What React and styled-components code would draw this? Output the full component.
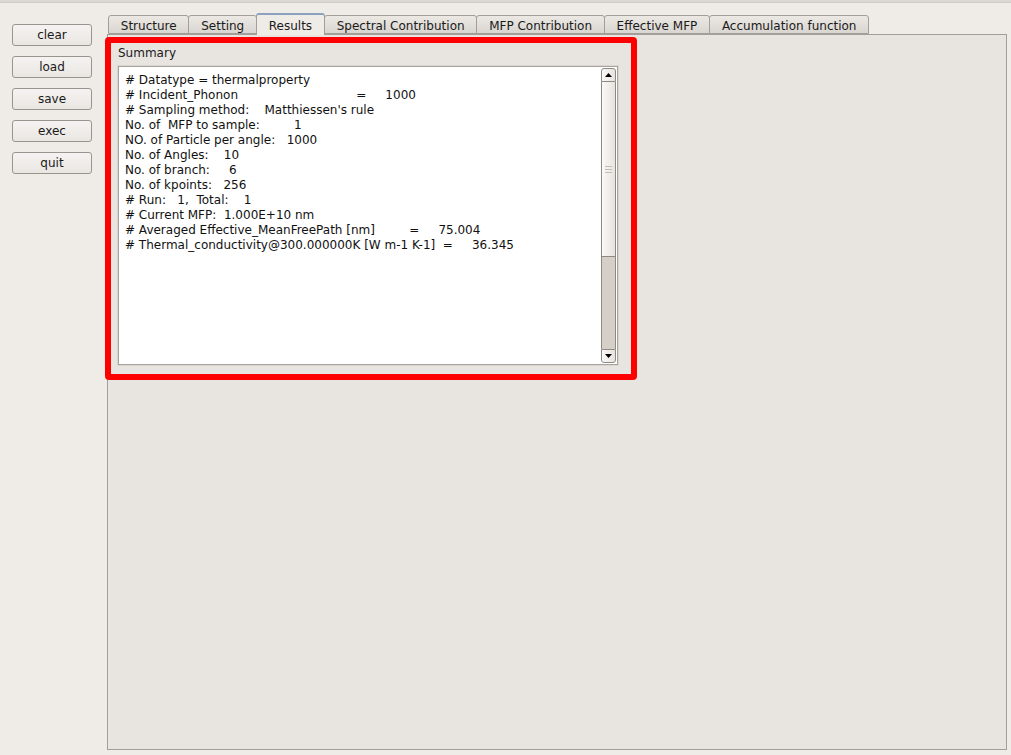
import React from "react";
import styled, { createGlobalStyle } from "styled-components";

const GlobalStyle = createGlobalStyle`
  html, body, #root {
    height: 100%;
  }
  body {
    margin: 0;
    background: #efebe7;
    font-family: "DejaVu Sans", "Liberation Sans", sans-serif;
    font-size: 12px;
    color: #1a1a1a;
    overflow: hidden;
  }
`;

const TopEdge = styled.div`
  height: 2px;
  background: #dcd8d4;
  border-bottom: 1px solid #cfcbc7;
`;

const Main = styled.div`
  display: flex;
  height: calc(100% - 3px);
`;

const Sidebar = styled.div`
  display: flex;
  flex-direction: column;
  gap: 10px;
  padding: 21px 15px 0 12px;
`;

const Button = styled.button`
  width: 80px;
  height: 22px;
  padding: 0;
  border: 1px solid #9a948e;
  border-radius: 3px;
  background: linear-gradient(#f5f3f1, #e9e6e2);
  font-family: inherit;
  font-size: 12px;
  color: #1a1a1a;
`;

const TabWidget = styled.div`
  flex: 1;
  display: flex;
  flex-direction: column;
  margin: 10px 4px 5px 0;
`;

const TabBar = styled.div`
  display: flex;
  align-items: flex-end;
  padding-left: 2px;
  position: relative;
  z-index: 1;
`;

const Tab = styled.div`
  height: ${(p) => (p.$active ? "19px" : "15px")};
  padding: ${(p) => (p.$active ? "1px" : "2px")} 11.8px 0;
  margin-bottom: ${(p) => (p.$active ? "-1px" : "0")};
  display: flex;
  align-items: center;
  justify-content: center;
  border: 1px solid #a39e99;
  border-bottom: ${(p) => (p.$active ? "none" : "1px solid #a39e99")};
  border-top: ${(p) => (p.$active ? "2px solid #8aa2bd" : "1px solid #a39e99")};
  margin-left: -1px;
  border-radius: 3px 3px 0 0;
  background: ${(p) =>
    p.$active ? "#efebe7" : "linear-gradient(#ece8e4, #d9d5d0)"};
  white-space: nowrap;
`;

const Pane = styled.div`
  flex: 1;
  border: 1px solid #a39e99;
  background: #e8e4e0;
  padding-top: 2px;
`;

const Highlight = styled.div`
  width: 513px;
  height: 328px;
  margin-left: -3px;
  border: 6px solid #ff0000;
  border-radius: 4px;
  padding: 3px 0 0 7px;
  box-sizing: content-box;
  display: flex;
  flex-direction: column;
`;

const GroupTitle = styled.div`
  height: 15px;
  line-height: 15px;
`;

const TextArea = styled.div`
  margin-top: 5px;
  width: 498px;
  height: 297px;
  display: flex;
  background: #fff;
  border: 1px solid #a8a39e;
  box-shadow: 0 0 0 1px #d9d5d1;
`;

const TextBody = styled.pre`
  flex: 1;
  margin: 0;
  padding: 6px 0 0 6px;
  font-family: "DejaVu Sans", "Liberation Sans", sans-serif;
  font-size: 12px;
  line-height: 15px;
  color: #111;
  white-space: pre;
  overflow: hidden;
`;

const ScrollBar = styled.div`
  width: 15px;
  margin: 1px 1px 1px 0;
  display: flex;
  flex-direction: column;
`;

const ArrowButton = styled.div`
  height: 14px;
  box-sizing: border-box;
  border: 1px solid #8e8983;
  border-radius: ${(p) => (p.$up ? "3px 3px 0 0" : "0 0 3px 3px")};
  background: linear-gradient(90deg, #fbfaf9, #e6e2de);
  display: flex;
  align-items: center;
  justify-content: center;
`;

const Thumb = styled.div`
  height: 175px;
  box-sizing: border-box;
  border: 1px solid #8e8983;
  border-top: none;
  background: linear-gradient(90deg, #fbfaf9, #e6e2de);
  display: flex;
  flex-direction: column;
  align-items: center;
  justify-content: center;
  gap: 2px;
`;

const Grip = styled.div`
  width: 7px;
  height: 1px;
  background: #c2bcb6;
`;

const Track = styled.div`
  flex: 1;
  box-sizing: border-box;
  border-left: 1px solid #8e8983;
  border-right: 1px solid #8e8983;
  background: #d5cfc8;
`;

const tabs = [
  "Structure",
  "Setting",
  "Results",
  "Spectral Contribution",
  "MFP Contribution",
  "Effective MFP",
  "Accumulation function",
];

const summary = [
  "# Datatype = thermalproperty",
  "# Incident_Phonon                               =     1000",
  "# Sampling method:    Matthiessen's rule",
  "No. of  MFP to sample:         1",
  "NO. of Particle per angle:   1000",
  "No. of Angles:    10",
  "No. of branch:     6",
  "No. of kpoints:   256",
  "# Run:   1,  Total:    1",
  "# Current MFP:  1.000E+10 nm",
  "# Averaged Effective_MeanFreePath [nm]         =     75.004",
  "# Thermal_conductivity@300.000000K [W m-1 K-1]  =     36.345",
].join("\n");

const Arrow = ({ up }) => (
  <svg width="7" height="4" viewBox="0 0 7 4">
    <polygon points={up ? "0,4 7,4 3.5,0" : "0,0 7,0 3.5,4"} fill="#000" />
  </svg>
);

const App = () => {
  return (
    <>
      <GlobalStyle />
      <TopEdge />
      <Main>
        <Sidebar>
          {["clear", "load", "save", "exec", "quit"].map((label) => (
            <Button key={label}>{label}</Button>
          ))}
        </Sidebar>
        <TabWidget>
          <TabBar>
            {tabs.map((t) => (
              <Tab key={t} $active={t === "Results"}>
                {t}
              </Tab>
            ))}
          </TabBar>
          <Pane>
            <Highlight>
              <GroupTitle>Summary</GroupTitle>
              <TextArea>
                <TextBody>{summary}</TextBody>
                <ScrollBar>
                  <ArrowButton $up>
                    <Arrow up />
                  </ArrowButton>
                  <Thumb>
                    <Grip />
                    <Grip />
                    <Grip />
                  </Thumb>
                  <Track />
                  <ArrowButton>
                    <Arrow />
                  </ArrowButton>
                </ScrollBar>
              </TextArea>
            </Highlight>
          </Pane>
        </TabWidget>
      </Main>
    </>
  );
};

export default App;
